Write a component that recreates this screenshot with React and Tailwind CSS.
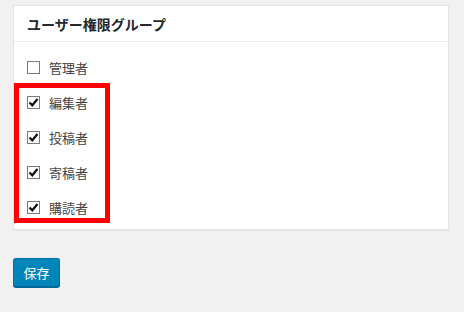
import React from "react";

const roles = [
  { name: "管理者", checked: false },
  { name: "編集者", checked: true },
  { name: "投稿者", checked: true },
  { name: "寄稿者", checked: true },
  { name: "購読者", checked: true },
];

function Box({ checked }) {
  return (
    <span className="w-[13px] h-[13px] border border-[#7a7a7a] bg-white flex items-center justify-center shrink-0">
      {checked && (
        <svg width="11" height="11" viewBox="0 0 11 11">
          <path d="M1.5 5.5 L4.3 8.3 L9.5 2" stroke="#111" strokeWidth="2.2" fill="none" />
        </svg>
      )}
    </span>
  );
}

export default function App() {
  return (
    <div
      className="w-[464px] h-[312px] bg-[#f1f1f1] pt-[5px] px-[13px] text-[#333] relative"
      style={{ fontFamily: '"Noto Sans CJK JP", "Noto Sans", sans-serif' }}
    >
      {/* panel */}
      <div className="w-[436px] h-[225px] bg-white border border-[#e5e5e5] shadow-[0_1px_1px_rgba(0,0,0,0.04)]">
        <div className="h-[36px] border-b border-[#eee] flex items-center pl-[13px]">
          <h2 className="text-[14px] font-bold text-[#23282d] leading-none">ユーザー権限グループ</h2>
        </div>
        <div className="pt-[16px] pl-[13px] flex flex-col gap-[17px]">
          {roles.map((r) => (
            <label key={r.name} className="flex items-center gap-[9px] h-[18px]">
              <Box checked={r.checked} />
              <span className="text-[13px] leading-none text-[#444]">{r.name}</span>
            </label>
          ))}
        </div>
      </div>

      {/* red annotation */}
      <div className="absolute left-[14px] top-[83px] w-[96px] h-[140px] border-[5px] border-[#ff0000] pointer-events-none" />

      <div className="pt-[28px]">
        <button className="w-[47px] h-[29px] bg-[#0085ba] border border-[#0073aa] border-b-[#006799] rounded-[3px] text-white text-[13px] leading-none shadow-[0_1px_0_#006799]">
          保存
        </button>
      </div>
    </div>
  );
}
